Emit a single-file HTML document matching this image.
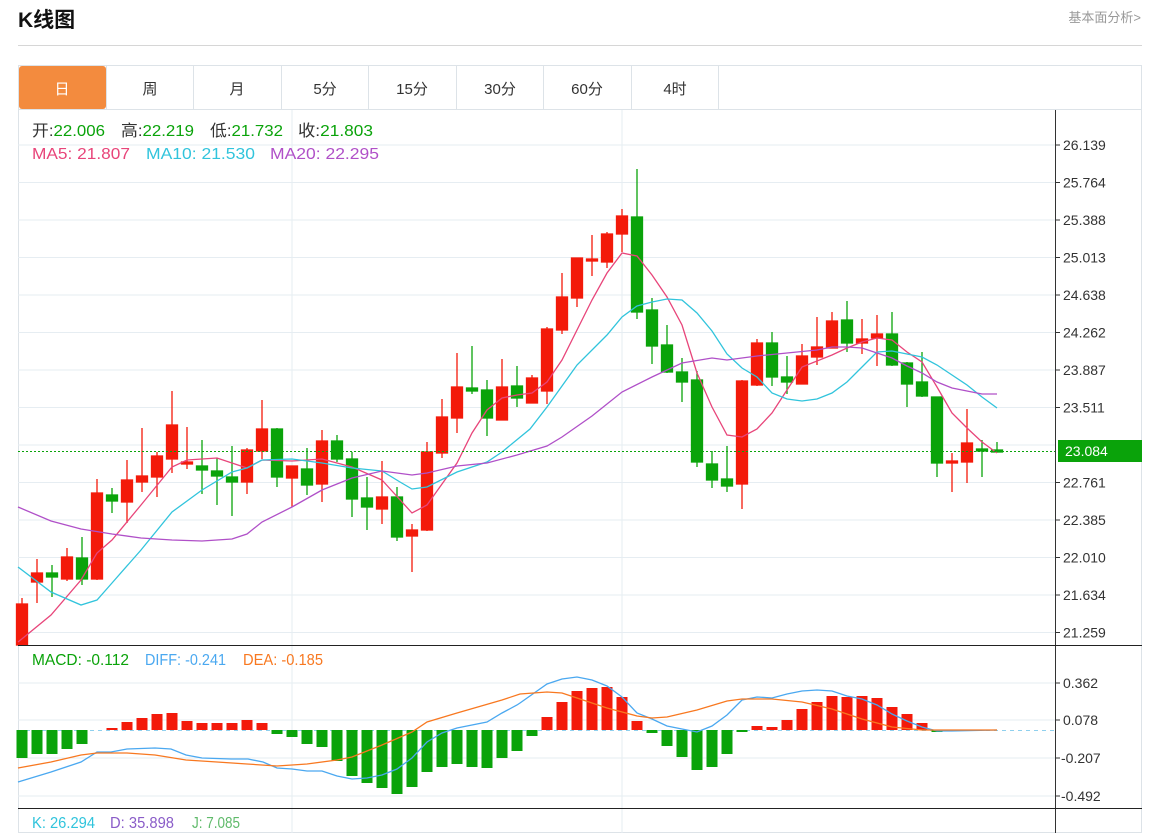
<!DOCTYPE html>
<html><head><meta charset="utf-8"><style>
body{margin:0;background:#fff;width:1158px;height:833px;overflow:hidden;font-family:"Liberation Sans","Noto Sans CJK SC",sans-serif}
svg{position:absolute;left:0;top:0}
</style></head><body>
<svg width="1158" height="833" viewBox="0 0 1158 833" font-family="Liberation Sans, Noto Sans CJK SC, sans-serif">
<text x="18" y="27" font-size="21" font-weight="bold" fill="#111">K线图</text>
<text x="1141" y="22" font-size="13" fill="#999" text-anchor="end">基本面分析&gt;</text>
<line x1="18" y1="45.5" x2="1142" y2="45.5" stroke="#d6d6d6"/>
<rect x="18.5" y="65.5" width="1123" height="767" fill="none" stroke="#dde3e8"/>
<line x1="18" y1="109.5" x2="1142" y2="109.5" stroke="#dde3e8"/>
<rect x="19" y="66" width="87" height="43" rx="3" fill="#f38b3e"/>
<g stroke="#dde3e8"><line x1="106.5" y1="65" x2="106.5" y2="109"/><line x1="193.5" y1="65" x2="193.5" y2="109"/><line x1="281.5" y1="65" x2="281.5" y2="109"/><line x1="368.5" y1="65" x2="368.5" y2="109"/><line x1="456.5" y1="65" x2="456.5" y2="109"/><line x1="543.5" y1="65" x2="543.5" y2="109"/><line x1="631.5" y1="65" x2="631.5" y2="109"/><line x1="718.5" y1="65" x2="718.5" y2="109"/></g>
<g font-size="15" text-anchor="middle" fill="#333">
<text x="62" y="94" fill="#fff">日</text><text x="150" y="94">周</text><text x="237" y="94">月</text><text x="325" y="94">5分</text><text x="412" y="94">15分</text><text x="500" y="94">30分</text><text x="587" y="94">60分</text><text x="675" y="94">4时</text>
</g>
<g stroke="#e6edf2" stroke-width="1">
<line x1="18" y1="145" x2="1055" y2="145"/><line x1="18" y1="182.5" x2="1055" y2="182.5"/><line x1="18" y1="220" x2="1055" y2="220"/><line x1="18" y1="257.5" x2="1055" y2="257.5"/><line x1="18" y1="295" x2="1055" y2="295"/><line x1="18" y1="332.5" x2="1055" y2="332.5"/><line x1="18" y1="370" x2="1055" y2="370"/><line x1="18" y1="407.5" x2="1055" y2="407.5"/><line x1="18" y1="445" x2="1055" y2="445"/><line x1="18" y1="482.5" x2="1055" y2="482.5"/><line x1="18" y1="520" x2="1055" y2="520"/><line x1="18" y1="557.5" x2="1055" y2="557.5"/><line x1="18" y1="595" x2="1055" y2="595"/><line x1="18" y1="632.5" x2="1055" y2="632.5"/>
<line x1="18" y1="683" x2="1055" y2="683"/><line x1="18" y1="720" x2="1055" y2="720"/><line x1="18" y1="758" x2="1055" y2="758"/><line x1="18" y1="796" x2="1055" y2="796"/>
<line x1="292" y1="110" x2="292" y2="833"/><line x1="622" y1="110" x2="622" y2="833"/>
</g>
<g font-size="16">
<text x="32" y="136" textLength="73" lengthAdjust="spacingAndGlyphs" fill="#333">开:<tspan fill="#0aa30a">22.006</tspan></text>
<text x="121" y="136" textLength="73" lengthAdjust="spacingAndGlyphs" fill="#333">高:<tspan fill="#0aa30a">22.219</tspan></text>
<text x="210" y="136" textLength="73" lengthAdjust="spacingAndGlyphs" fill="#333">低:<tspan fill="#0aa30a">21.732</tspan></text>
<text x="298" y="136" textLength="75" lengthAdjust="spacingAndGlyphs" fill="#333">收:<tspan fill="#0aa30a">21.803</tspan></text>
<text x="32" y="159" textLength="98" lengthAdjust="spacingAndGlyphs" fill="#e8457a">MA5: 21.807</text>
<text x="146" y="159" textLength="109" lengthAdjust="spacingAndGlyphs" fill="#31c4dc">MA10: 21.530</text>
<text x="270" y="159" textLength="109" lengthAdjust="spacingAndGlyphs" fill="#b050c8">MA20: 22.295</text>
</g>
<g stroke-width="1.3">
<g stroke="#f31a0a" fill="#f31a0a">
<line x1="22" y1="598" x2="22" y2="645"/><rect x="16.5" y="604" width="11" height="41"/>
<line x1="37" y1="559" x2="37" y2="603"/><rect x="31.5" y="573" width="11" height="9"/>
<line x1="67" y1="548" x2="67" y2="581"/><rect x="61.5" y="557" width="11" height="22"/>
<line x1="97" y1="479" x2="97" y2="580"/><rect x="91.5" y="493" width="11" height="86"/>
<line x1="127" y1="460" x2="127" y2="523"/><rect x="121.5" y="480" width="11" height="22"/>
<line x1="142" y1="428" x2="142" y2="492"/><rect x="136.5" y="476" width="11" height="6"/>
<line x1="157" y1="452" x2="157" y2="497"/><rect x="151.5" y="456" width="11" height="21"/>
<line x1="172" y1="391" x2="172" y2="473"/><rect x="166.5" y="425" width="11" height="34"/>
<line x1="187" y1="427" x2="187" y2="469"/><rect x="181.5" y="462" width="11" height="2"/>
<line x1="247" y1="448" x2="247" y2="494"/><rect x="241.5" y="450" width="11" height="32"/>
<line x1="262" y1="400" x2="262" y2="459"/><rect x="256.5" y="429" width="11" height="22"/>
<line x1="292" y1="466" x2="292" y2="507"/><rect x="286.5" y="466" width="11" height="12"/>
<line x1="322" y1="430" x2="322" y2="502"/><rect x="316.5" y="441" width="11" height="43"/>
<line x1="382" y1="461" x2="382" y2="524"/><rect x="376.5" y="497" width="11" height="12"/>
<line x1="412" y1="524" x2="412" y2="572"/><rect x="406.5" y="530" width="11" height="6"/>
<line x1="427" y1="442" x2="427" y2="531"/><rect x="421.5" y="452" width="11" height="78"/>
<line x1="442" y1="399" x2="442" y2="458"/><rect x="436.5" y="417" width="11" height="36"/>
<line x1="457" y1="353" x2="457" y2="433"/><rect x="451.5" y="387" width="11" height="31"/>
<line x1="502" y1="359" x2="502" y2="420"/><rect x="496.5" y="387" width="11" height="33"/>
<line x1="532" y1="375" x2="532" y2="403"/><rect x="526.5" y="378" width="11" height="25"/>
<line x1="547" y1="327" x2="547" y2="404"/><rect x="541.5" y="329" width="11" height="62"/>
<line x1="562" y1="273" x2="562" y2="334"/><rect x="556.5" y="297" width="11" height="33"/>
<line x1="577" y1="258" x2="577" y2="307"/><rect x="571.5" y="258" width="11" height="40"/>
<line x1="592" y1="235" x2="592" y2="276"/><rect x="586.5" y="259" width="11" height="2"/>
<line x1="607" y1="232" x2="607" y2="268"/><rect x="601.5" y="234" width="11" height="28"/>
<line x1="622" y1="209" x2="622" y2="252"/><rect x="616.5" y="216" width="11" height="18"/>
<line x1="742" y1="380" x2="742" y2="509"/><rect x="736.5" y="381" width="11" height="103"/>
<line x1="757" y1="339" x2="757" y2="386"/><rect x="751.5" y="343" width="11" height="42"/>
<line x1="802" y1="344" x2="802" y2="384"/><rect x="796.5" y="356" width="11" height="28"/>
<line x1="817" y1="317" x2="817" y2="365"/><rect x="811.5" y="347" width="11" height="10"/>
<line x1="832" y1="312" x2="832" y2="348"/><rect x="826.5" y="321" width="11" height="27"/>
<line x1="862" y1="319" x2="862" y2="354"/><rect x="856.5" y="339" width="11" height="4"/>
<line x1="877" y1="315" x2="877" y2="366"/><rect x="871.5" y="334" width="11" height="4"/>
<line x1="952" y1="453" x2="952" y2="492"/><rect x="946.5" y="461" width="11" height="2"/>
<line x1="967" y1="409" x2="967" y2="483"/><rect x="961.5" y="443" width="11" height="19"/>
</g>
<g stroke="#0aa30a" fill="#0aa30a">
<line x1="52" y1="565" x2="52" y2="597"/><rect x="46.5" y="573" width="11" height="4"/>
<line x1="82" y1="537" x2="82" y2="585"/><rect x="76.5" y="558" width="11" height="21"/>
<line x1="112" y1="488" x2="112" y2="513"/><rect x="106.5" y="495" width="11" height="6"/>
<line x1="202" y1="440" x2="202" y2="494"/><rect x="196.5" y="466" width="11" height="4"/>
<line x1="217" y1="458" x2="217" y2="505"/><rect x="211.5" y="471" width="11" height="5"/>
<line x1="232" y1="446" x2="232" y2="516"/><rect x="226.5" y="477" width="11" height="5"/>
<line x1="277" y1="428" x2="277" y2="487"/><rect x="271.5" y="429" width="11" height="48"/>
<line x1="307" y1="448" x2="307" y2="495"/><rect x="301.5" y="469" width="11" height="16"/>
<line x1="337" y1="435" x2="337" y2="462"/><rect x="331.5" y="441" width="11" height="18"/>
<line x1="352" y1="452" x2="352" y2="517"/><rect x="346.5" y="459" width="11" height="40"/>
<line x1="367" y1="477" x2="367" y2="530"/><rect x="361.5" y="498" width="11" height="9"/>
<line x1="397" y1="487" x2="397" y2="541"/><rect x="391.5" y="497" width="11" height="40"/>
<line x1="472" y1="346" x2="472" y2="394"/><rect x="466.5" y="388" width="11" height="3"/>
<line x1="487" y1="380" x2="487" y2="436"/><rect x="481.5" y="390" width="11" height="28"/>
<line x1="517" y1="366" x2="517" y2="407"/><rect x="511.5" y="386" width="11" height="12"/>
<line x1="637" y1="169" x2="637" y2="319"/><rect x="631.5" y="217" width="11" height="95"/>
<line x1="652" y1="298" x2="652" y2="364"/><rect x="646.5" y="310" width="11" height="36"/>
<line x1="667" y1="325" x2="667" y2="373"/><rect x="661.5" y="345" width="11" height="27"/>
<line x1="682" y1="358" x2="682" y2="402"/><rect x="676.5" y="372" width="11" height="10"/>
<line x1="697" y1="371" x2="697" y2="467"/><rect x="691.5" y="380" width="11" height="82"/>
<line x1="712" y1="451" x2="712" y2="488"/><rect x="706.5" y="464" width="11" height="16"/>
<line x1="727" y1="446" x2="727" y2="492"/><rect x="721.5" y="479" width="11" height="7"/>
<line x1="772" y1="332" x2="772" y2="386"/><rect x="766.5" y="343" width="11" height="34"/>
<line x1="787" y1="356" x2="787" y2="394"/><rect x="781.5" y="377" width="11" height="5"/>
<line x1="847" y1="301" x2="847" y2="352"/><rect x="841.5" y="320" width="11" height="23"/>
<line x1="892" y1="312" x2="892" y2="366"/><rect x="886.5" y="334" width="11" height="31"/>
<line x1="907" y1="362" x2="907" y2="407"/><rect x="901.5" y="363" width="11" height="21"/>
<line x1="922" y1="352" x2="922" y2="397"/><rect x="916.5" y="382" width="11" height="14"/>
<line x1="937" y1="397" x2="937" y2="477"/><rect x="931.5" y="397" width="11" height="66"/>
<line x1="982" y1="440" x2="982" y2="477"/><rect x="976.5" y="449" width="11" height="2"/>
<line x1="997" y1="442" x2="997" y2="452"/><rect x="991.5" y="450" width="11" height="2"/>
</g>
</g>
<g fill="none" stroke-width="1.3">
<polyline stroke="#e8457a" points="18,642 23,638 51,615 81,580 97,553 112,540 141,505 172,467 187,460 217,458 247,468 262,460 292,461 322,459 352,467 382,480 412,513 427,505 457,463 472,433 487,410 502,398 517,395 532,393 547,382 562,360 577,330 592,300 607,273 622,253 637,256 652,275 667,297 682,325 697,373 712,407 727,435 742,437 757,429 772,413 787,390 802,367 817,361 832,355 847,348 862,342 877,338 892,340 907,352 922,362 937,387 952,413 967,428 982,442 997,453"/>
<polyline stroke="#31c4dc" points="18,567 51,592 81,605 97,600 112,583 141,550 172,512 202,490 232,472 247,468 262,460 292,459 322,463 352,468 382,471 400,482 412,489 427,487 457,472 487,462 502,452 530,429 547,407 577,365 607,335 622,317 637,306 652,302 667,299 682,300 697,313 712,331 727,354 742,368 757,377 772,393 787,399 802,401 817,399 832,393 847,382 862,367 877,352 892,351 907,354 922,357 937,365 952,375 967,385 982,397 997,408"/>
<polyline stroke="#b050c8" points="18,507 51,521 81,529 112,534 141,538 172,540 202,541 232,539 247,534 262,522 292,507 322,490 352,478 382,471 412,475 427,473 457,466 487,463 517,455 547,446 562,437 592,416 622,392 652,377 682,363 712,358 727,360 757,356 787,353 817,350 832,347 847,347 862,348 877,353 892,358 907,366 922,373 937,382 952,388 967,391 982,394 997,394"/>
</g>
<line x1="18" y1="451.5" x2="1055" y2="451.5" stroke="#0aa30a" stroke-dasharray="2,2"/>
<line x1="18" y1="730.5" x2="1055" y2="730.5" stroke="#8fd0ee" stroke-dasharray="4,4"/>
<g fill="#0aa30a">
<rect x="16.5" y="730" width="11" height="28"/><rect x="31.5" y="730" width="11" height="24"/><rect x="46.5" y="730" width="11" height="24"/><rect x="61.5" y="730" width="11" height="19"/><rect x="76.5" y="730" width="11" height="14"/>
<rect x="271.5" y="730" width="11" height="4"/><rect x="286.5" y="730" width="11" height="7"/><rect x="301.5" y="730" width="11" height="14"/><rect x="316.5" y="730" width="11" height="17"/><rect x="331.5" y="730" width="11" height="31"/><rect x="346.5" y="730" width="11" height="46"/><rect x="361.5" y="730" width="11" height="53"/><rect x="376.5" y="730" width="11" height="58"/><rect x="391.5" y="730" width="11" height="64"/><rect x="406.5" y="730" width="11" height="57"/><rect x="421.5" y="730" width="11" height="42"/><rect x="436.5" y="730" width="11" height="37"/><rect x="451.5" y="730" width="11" height="34"/><rect x="466.5" y="730" width="11" height="37"/><rect x="481.5" y="730" width="11" height="38"/><rect x="496.5" y="730" width="11" height="28"/><rect x="511.5" y="730" width="11" height="21"/><rect x="526.5" y="730" width="11" height="6"/>
<rect x="646.5" y="730" width="11" height="3"/><rect x="661.5" y="730" width="11" height="16"/><rect x="676.5" y="730" width="11" height="27"/><rect x="691.5" y="730" width="11" height="40"/><rect x="706.5" y="730" width="11" height="37"/><rect x="721.5" y="730" width="11" height="24"/><rect x="736.5" y="730" width="11" height="2"/><rect x="931.5" y="730" width="11" height="2"/>
</g>
<g fill="#f31a0a">
<rect x="106.5" y="728" width="11" height="2"/><rect x="121.5" y="722" width="11" height="8"/><rect x="136.5" y="718" width="11" height="12"/><rect x="151.5" y="714" width="11" height="16"/><rect x="166.5" y="713" width="11" height="17"/><rect x="181.5" y="721" width="11" height="9"/><rect x="196.5" y="723" width="11" height="7"/><rect x="211.5" y="723" width="11" height="7"/><rect x="226.5" y="723" width="11" height="7"/><rect x="241.5" y="720" width="11" height="10"/><rect x="256.5" y="723" width="11" height="7"/>
<rect x="541.5" y="717" width="11" height="13"/><rect x="556.5" y="702" width="11" height="28"/><rect x="571.5" y="691" width="11" height="39"/><rect x="586.5" y="688" width="11" height="42"/><rect x="601.5" y="687" width="11" height="43"/><rect x="616.5" y="697" width="11" height="33"/><rect x="631.5" y="721" width="11" height="9"/>
<rect x="751.5" y="726" width="11" height="4"/><rect x="766.5" y="727" width="11" height="3"/><rect x="781.5" y="720" width="11" height="10"/><rect x="796.5" y="709" width="11" height="21"/><rect x="811.5" y="702" width="11" height="28"/><rect x="826.5" y="696" width="11" height="34"/><rect x="841.5" y="697" width="11" height="33"/><rect x="856.5" y="696" width="11" height="34"/><rect x="871.5" y="698" width="11" height="32"/><rect x="886.5" y="707" width="11" height="23"/><rect x="901.5" y="714" width="11" height="16"/><rect x="916.5" y="723" width="11" height="7"/>
</g>
<g fill="none" stroke-width="1.3">
<polyline stroke="#4aa8f0" points="18,782 51,772 81,762 97,752 111,752 127,749 155,748 171,749 186,755 202,758 231,759 248,759 263,762 277,768 292,769 307,771 322,771 337,776 352,779 367,778 382,775 397,769 412,758 427,742 442,733 457,728 487,722 502,713 517,705 520,703 547,684 562,679 577,677 592,680 607,686 622,697 637,713 652,719 667,726 682,729 697,732 712,726 727,715 742,700 757,697 772,698 787,694 802,691 817,690 832,691 847,696 862,699 877,705 892,714 907,721 922,727 937,731 952,731 997,730"/>
<polyline stroke="#f87820" points="18,768 51,762 81,755 97,753 127,753 155,755 186,760 217,762 247,764 277,766 307,764 337,760 352,757 382,745 412,732 427,722 457,713 502,700 520,694 547,692 562,693 577,698 607,708 637,716 652,718 667,717 697,710 727,701 742,699 772,699 802,702 832,709 862,719 892,727 922,730 997,730"/>
</g>
<g font-size="16">
<text x="32" y="665" textLength="97" lengthAdjust="spacingAndGlyphs" fill="#0aa30a">MACD: -0.112</text>
<text x="145" y="665" textLength="81" lengthAdjust="spacingAndGlyphs" fill="#4aa8f0">DIFF: -0.241</text>
<text x="243" y="665" textLength="80" lengthAdjust="spacingAndGlyphs" fill="#f87820">DEA: -0.185</text>
<text x="32" y="828" textLength="63" lengthAdjust="spacingAndGlyphs" fill="#31c4dc">K: 26.294</text>
<text x="110" y="828" textLength="64" lengthAdjust="spacingAndGlyphs" fill="#8a5cc8">D: 35.898</text>
<text x="192" y="828" textLength="48" lengthAdjust="spacingAndGlyphs" fill="#5fba6a">J: 7.085</text>
</g>
<line x1="1055.5" y1="110" x2="1055.5" y2="833" stroke="#333"/>
<line x1="18" y1="645.5" x2="1142" y2="645.5" stroke="#222"/>
<line x1="18" y1="808.5" x2="1142" y2="808.5" stroke="#222"/>
<g stroke="#333"><line x1="1055" y1="145" x2="1060" y2="145"/><line x1="1055" y1="182.5" x2="1060" y2="182.5"/><line x1="1055" y1="220" x2="1060" y2="220"/><line x1="1055" y1="257.5" x2="1060" y2="257.5"/><line x1="1055" y1="295" x2="1060" y2="295"/><line x1="1055" y1="332.5" x2="1060" y2="332.5"/><line x1="1055" y1="370" x2="1060" y2="370"/><line x1="1055" y1="407.5" x2="1060" y2="407.5"/><line x1="1055" y1="482.5" x2="1060" y2="482.5"/><line x1="1055" y1="520" x2="1060" y2="520"/><line x1="1055" y1="557.5" x2="1060" y2="557.5"/><line x1="1055" y1="595" x2="1060" y2="595"/><line x1="1055" y1="632.5" x2="1060" y2="632.5"/><line x1="1055" y1="683" x2="1060" y2="683"/><line x1="1055" y1="720" x2="1060" y2="720"/><line x1="1055" y1="758" x2="1060" y2="758"/><line x1="1055" y1="796" x2="1060" y2="796"/></g>
<g font-size="14" fill="#333">
<text x="1063" y="150">26.139</text><text x="1063" y="187.5">25.764</text><text x="1063" y="225">25.388</text><text x="1063" y="262.5">25.013</text><text x="1063" y="300">24.638</text><text x="1063" y="337.5">24.262</text><text x="1063" y="375">23.887</text><text x="1063" y="412.5">23.511</text><text x="1063" y="450">23.136</text><text x="1063" y="487.5">22.761</text><text x="1063" y="525">22.385</text><text x="1063" y="562.5">22.010</text><text x="1063" y="600">21.634</text><text x="1063" y="637.5">21.259</text>
<text x="1063" y="688">0.362</text><text x="1063" y="725">0.078</text><text x="1061" y="763">-0.207</text><text x="1061" y="801">-0.492</text>
</g>
<rect x="1058" y="440" width="84" height="22" fill="#0aa30a"/>
<text x="1065" y="456" font-size="14" fill="#fff">23.084</text>
</svg>
</body></html>
